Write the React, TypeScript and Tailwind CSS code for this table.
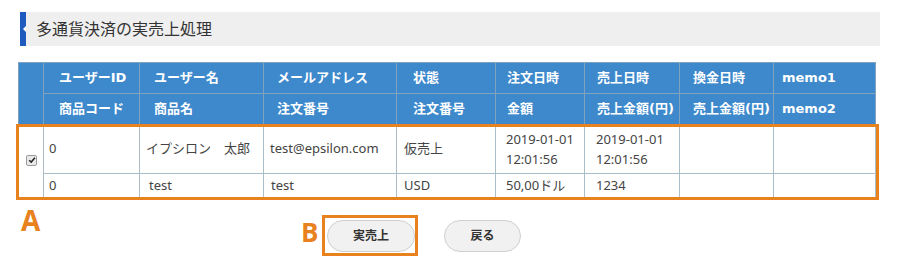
import React from "react";

const orange = "border-[#e8821f]";

const headTop = [
  { label: "ユーザーID", pl: "pl-[15px]" },
  { label: "ユーザー名", pl: "pl-[14px]" },
  { label: "メールアドレス", pl: "pl-[13px]" },
  { label: "状態", pl: "pl-[16px]" },
  { label: "注文日時", pl: "pl-[11px]" },
  { label: "売上日時", pl: "pl-[12px]" },
  { label: "換金日時", pl: "pl-[13px]" },
  { label: "memo1", pl: "pl-[8px]" },
];

const headBottom = [
  "商品コード",
  "商品名",
  "注文番号",
  "注文番号",
  "金額",
  "売上金額(円)",
  "売上金額(円)",
  "memo2",
];

const widths = [25, 96, 124, 133, 99, 89, 95, 94, 102];

function CheckBox() {
  return (
    <span className="inline-flex h-[11px] w-[11px] items-center justify-center rounded-[2px] border border-[#9a9a9a] bg-[#e9e9e9] align-middle">
      <svg viewBox="0 0 10 10" className="h-[8px] w-[8px]">
        <path d="M1.5 5.2 L4 7.6 L8.6 2.2" fill="none" stroke="#222" strokeWidth="1.8" />
      </svg>
    </span>
  );
}

export default function App() {
  const th = "border border-[#7fa3bf] text-left align-middle font-bold text-white";
  const cell = "border border-[#a9bec9] align-middle text-[13px] text-[#444]";
  const td = `${cell} text-left`;

  return (
    <div
      className="relative h-[278px] w-[900px] bg-white"
      style={{ fontFamily: '"Noto Sans", "Noto Sans CJK JP", sans-serif' }}
    >
      {/* heading */}
      <div className="ml-[20px] mr-[20px] pt-[12px]">
        <div className="relative flex h-[34px] items-center border-l-[6px] border-[#1f5bbf] bg-[#efefef] pl-[10px] text-[16px] text-[#333]">
          <span className="absolute left-[-3px] top-[14px] h-0 w-0 border-y-[3px] border-r-[3px] border-y-transparent border-r-white" />
          多通貨決済の実売上処理
        </div>
      </div>

      {/* table */}
      <div className="relative ml-[18px] mt-[16px] w-[857px]">
        <table className="w-[857px] table-fixed border-collapse border border-[#b9c3c9]">
          <colgroup>
            {widths.map((w, i) => (
              <col key={i} style={{ width: w }} />
            ))}
          </colgroup>
          <thead
            className="bg-[#3d89cc] text-[13px]"
            style={{ fontFamily: '"DejaVu Sans", "Noto Sans CJK JP", sans-serif' }}
          >
            <tr className="h-[31px]">
              <th rowSpan={2} className={th} />
              {headTop.map((h, i) => (
                <th key={i} className={`${th} ${h.pl}`}>
                  {h.label}
                </th>
              ))}
            </tr>
            <tr className="h-[31px]">
              {headBottom.map((h, i) => (
                <th key={i} className={`${th} ${headTop[i].pl}`}>
                  {h}
                </th>
              ))}
            </tr>
          </thead>
          <tbody>
            <tr className="h-[49px]">
              <td rowSpan={2} className={`${cell} pb-[5px] pl-[1px] text-center leading-none`}>
                <CheckBox />
              </td>
              <td className={`${td} pl-[5px]`}>0</td>
              <td className={`${td} pl-[6px]`}>イプシロン　太郎</td>
              <td className={`${td} pl-[6px]`}>test@epsilon.com</td>
              <td className={`${td} pl-[7px]`}>仮売上</td>
              <td className={`${td} pl-[10px] leading-[20px]`}>
                2019-01-01
                <br />
                12:01:56
              </td>
              <td className={`${td} pl-[11px] leading-[20px]`}>
                2019-01-01
                <br />
                12:01:56
              </td>
              <td className={td} />
              <td className={td} />
            </tr>
            <tr className="h-[25px]">
              <td className={`${td} pl-[5px]`}>0</td>
              <td className={`${td} pl-[9px]`}>test</td>
              <td className={`${td} pl-[7px]`}>test</td>
              <td className={`${td} pl-[7px]`}>USD</td>
              <td className={`${td} pl-[10px]`}>50,00ドル</td>
              <td className={`${td} pl-[11px]`}>1234</td>
              <td className={td} />
              <td className={td} />
            </tr>
          </tbody>
        </table>
        {/* annotation A box */}
        <div className={`pointer-events-none absolute left-[-2px] top-[62px] h-[76px] w-[863px] border-[3px] ${orange}`} />
      </div>

      {/* buttons */}
      <div className="relative mt-[21px] flex h-[32px] items-center gap-[29px] pl-[327px]">
        <button className="h-[32px] w-[88px] rounded-full border border-[#cfcfcf] bg-[#f1f1f1] text-[12px] font-bold text-[#333]">
          実売上
        </button>
        <button className="h-[32px] w-[77px] rounded-full border border-[#cfcfcf] bg-[#f1f1f1] text-[12px] font-bold text-[#333]">
          戻る
        </button>
        {/* annotation B box */}
        <div className={`pointer-events-none absolute left-[322px] top-[-5px] h-[41px] w-[96px] border-[3px] ${orange}`} />
        <span
          className="absolute left-[301px] top-[-1px] text-[26px] font-bold leading-none text-[#e8821f]"
          style={{ fontFamily: '"Open Sans", sans-serif' }}
        >
          B
        </span>
        <span
          className="absolute left-[21px] top-[-14px] text-[28px] font-bold leading-none text-[#e8821f]"
          style={{ fontFamily: '"Open Sans", sans-serif' }}
        >
          A
        </span>
      </div>
    </div>
  );
}
